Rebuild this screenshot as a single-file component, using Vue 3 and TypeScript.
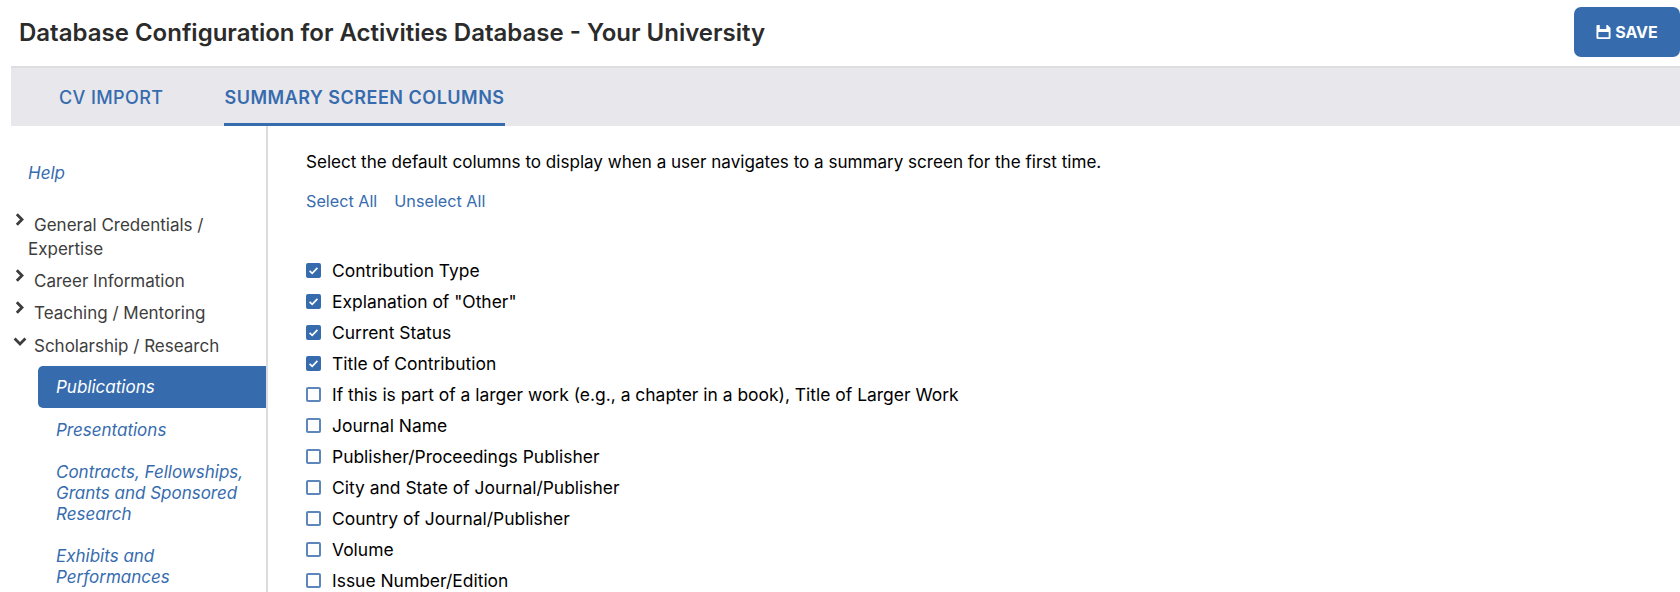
<script setup lang="ts">
interface Group {
  label: string
  open?: boolean
}

const groups: Group[] = [
  { label: 'General Credentials / Expertise' },
  { label: 'Career Information' },
  { label: 'Teaching / Mentoring' },
  { label: 'Scholarship / Research', open: true },
]

const subItems = [
  'Publications',
  'Presentations',
  'Contracts, Fellowships, Grants and Sponsored Research',
  'Exhibits and Performances',
]

const columns = [
  { label: 'Contribution Type', checked: true },
  { label: 'Explanation of "Other"', checked: true },
  { label: 'Current Status', checked: true },
  { label: 'Title of Contribution', checked: true },
  { label: 'If this is part of a larger work (e.g., a chapter in a book), Title of Larger Work', checked: false },
  { label: 'Journal Name', checked: false },
  { label: 'Publisher/Proceedings Publisher', checked: false },
  { label: 'City and State of Journal/Publisher', checked: false },
  { label: 'Country of Journal/Publisher', checked: false },
  { label: 'Volume', checked: false },
  { label: 'Issue Number/Edition', checked: false },
]
</script>

<template>
  <div class="page">
    <header class="top">
      <h1>Database Configuration for Activities Database - Your University</h1>
      <button class="save" type="button">
        <svg class="save-icon" viewBox="0 0 16 16" width="15" height="16">
          <path fill="#fff" fill-rule="evenodd" d="M1.5 0.5H12.3L15.5 3.7V14A1.5 1.5 0 0 1 14 15.5H2A1.5 1.5 0 0 1 0.5 14V1.5A1 1 0 0 1 1.5 0.5ZM4 0.5V4.8H11V0.5ZM2.5 8V13.7H13.5V8Z" />
        </svg>
        SAVE
      </button>
    </header>

    <nav class="tabs">
      <a class="tab">CV IMPORT</a>
      <a class="tab active">SUMMARY SCREEN COLUMNS</a>
    </nav>

    <div class="body">
      <aside class="side">
        <a class="help">Help</a>
        <ul class="groups">
          <li v-for="g in groups" :key="g.label" class="group">
            <svg v-if="g.open" class="chev down" viewBox="0 0 14 9" width="14" height="9">
              <path d="M1.6 1.6 7 7l5.4-5.4" fill="none" stroke="#3d3d3d" stroke-width="2.8" />
            </svg>
            <svg v-else class="chev" viewBox="0 0 9 13" width="9" height="13">
              <path d="M1.8 1.3 7 6.5l-5.2 5.2" fill="none" stroke="#3d3d3d" stroke-width="2.8" />
            </svg>
            <span class="group-label">{{ g.label }}</span>
          </li>
        </ul>
        <ul class="subs">
          <li v-for="(s, i) in subItems" :key="s" class="sub" :class="{ current: i === 0 }">{{ s }}</li>
        </ul>
      </aside>

      <main class="main">
        <p class="intro">Select the default columns to display when a user navigates to a summary screen for the first time.</p>
        <div class="links">
          <a>Select All</a>
          <a>Unselect All</a>
        </div>
        <ul class="cols">
          <li v-for="c in columns" :key="c.label" class="col">
            <span class="box" :class="{ on: c.checked }">
              <svg v-if="c.checked" viewBox="0 0 15 15" width="15" height="15">
                <path d="M3.6 7.8 6.2 10.3 11.4 4.9" fill="none" stroke="#fff" stroke-width="1.7" />
              </svg>
            </span>
            <span>{{ c.label }}</span>
          </li>
        </ul>
      </main>
    </div>
  </div>
</template>

<style>
html,
body {
  margin: 0;
  background: #fff;
  overflow: hidden;
}
</style>

<style scoped>
.page {
  height: 592px;
  overflow: hidden;
  font-family: Inter, 'Liberation Sans', sans-serif;
  font-size: 17px;
  color: #000;
}

.top {
  height: 66px;
  display: flex;
  align-items: flex-start;
  justify-content: space-between;
  padding-left: 19px;
}

h1 {
  margin: 0;
  padding-top: 18px;
  font-size: 24px;
  line-height: 30px;
  font-weight: 600;
  color: #2b2b2b;
}

.save {
  margin-top: 7px;
  width: 106px;
  height: 50px;
  display: flex;
  align-items: center;
  justify-content: center;
  gap: 4px;
  border: 0;
  border-radius: 7px;
  background: #366cae;
  color: #fff;
  font: 700 16px Inter, sans-serif;
}

.tabs {
  margin-left: 11px;
  height: 60px;
  box-sizing: border-box;
  border-top: 2px solid #dedede;
  background: #e8e7ec;
  display: flex;
  padding-left: 48px;
  gap: 61px;
}

.tab {
  box-sizing: border-box;
  height: 58px;
  line-height: 60px;
  font-size: 18px;
  font-weight: 500;
  letter-spacing: 0.4px;
  color: #366cae;
}

.tab.active {
  font-weight: 600;
  border-bottom: 3px solid #366cae;
  letter-spacing: 0.5px;
}

.body {
  margin-left: 11px;
  display: flex;
  height: 466px;
}

.side {
  width: 255px;
  flex: none;
  border-right: 2px solid #dcdcdc;
}

.help {
  display: block;
  margin: 36px 0 0 17px;
  line-height: 22px;
  font-style: italic;
  color: #366cae;
}

.groups {
  list-style: none;
  margin: 29px 0 0;
  padding: 0 30px 0 17px;
  color: #3d3d3d;
}

.group {
  position: relative;
  line-height: 24.3px;
  margin-bottom: 8px;
  text-indent: 6px;
}

.group:first-child {
  margin-bottom: 7px;
}

.group:nth-child(3) {
  margin-bottom: 9px;
}

.chev {
  position: absolute;
  left: -13px;
  top: 0;
}

.chev.down {
  left: -15px;
  top: 3px;
}

.subs {
  list-style: none;
  margin: 8px 0 0 27px;
  padding: 0;
}

.sub {
  padding: 0 14px 21px 18px;
  line-height: 21px;
  font-style: italic;
  color: #366cae;
}

.sub.current {
  margin-bottom: 12px;
  padding: 11px 18px 10px;
  background: #366cae;
  color: #fff;
  border-radius: 5px 0 0 5px;
}

.main {
  flex: 1;
  padding: 0 0 0 38px;
}

.intro {
  margin: 25px 0 0;
  line-height: 22px;
  font-size: 17.07px;
}

.links {
  display: flex;
  gap: 17px;
  margin-top: 17px;
  font-size: 16.2px;
  line-height: 22px;
  color: #366cae;
}

.cols {
  list-style: none;
  margin: 43px 0 0;
  padding: 0;
  font-size: 17.45px;
}

.col {
  display: flex;
  align-items: center;
  gap: 11px;
  height: 31px;
}

.box {
  box-sizing: border-box;
  width: 15px;
  height: 15px;
  border: 2px solid #5d86ba;
  border-radius: 2px;
  background: #fff;
  position: relative;
}

.box.on {
  background: #366cae;
  border-color: #366cae;
}

.box svg {
  position: absolute;
  left: -2px;
  top: -2px;
}
</style>
